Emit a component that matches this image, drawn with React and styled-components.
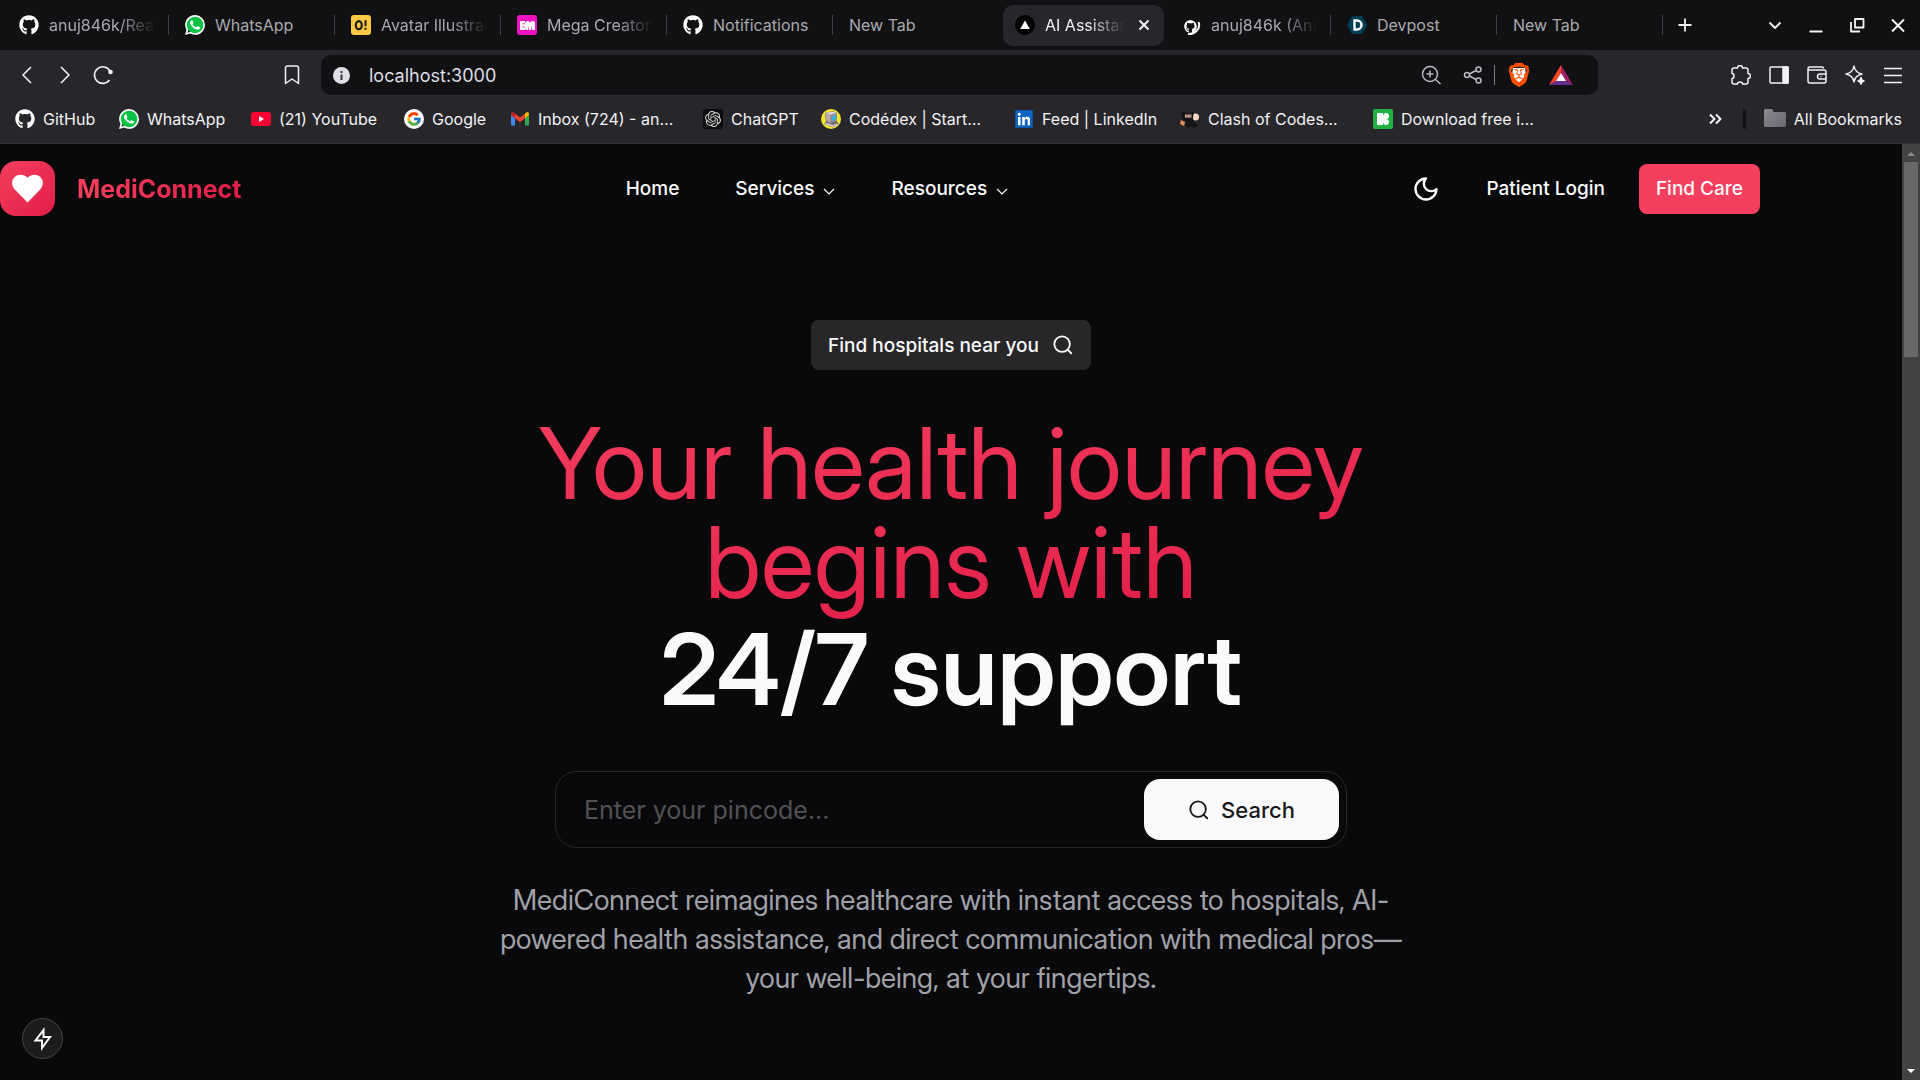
import * as React from "react";
import styled, { createGlobalStyle } from "styled-components";
import { FaGithub, FaLinkedin } from "react-icons/fa6";
import { SiWhatsapp, SiBrave, SiOpenai } from "react-icons/si";
import { FcGoogle } from "react-icons/fc";

const GlobalStyle = createGlobalStyle`
  * {
    box-sizing: border-box;
  }
  body {
    margin: 0;
    background-color: #09090b;
    color: #fafafa;
    font-family: "Inter", "Liberation Sans", sans-serif;
  }
  h1, p, ul {
    margin: 0;
    padding: 0;
  }
  ul {
    list-style: none;
  }
  a {
    color: inherit;
    text-decoration: none;
  }
  button, input {
    font: inherit;
    color: inherit;
    border: 0;
    padding: 0;
    background: none;
  }
  svg {
    display: block;
    flex-shrink: 0;
  }
`;

const TABS = [
  { title: "anuj846k/Readme", icon: <FaGithub size={20} color="#fff" />, line: true, fade: true },
  { title: "WhatsApp", icon: <WhatsAppIcon />, line: true },
  { title: "Avatar Illustrations", icon: <OutlineIcon />, line: true, fade: true },
  { title: "Mega Creator", icon: <MegaIcon />, line: true, fade: true },
  { title: "Notifications", icon: <FaGithub size={20} color="#fff" />, line: true },
  { title: "New Tab" },
  { title: "AI Assistant", icon: <VercelIcon />, active: true, fade: true },
  { title: "anuj846k (Anuj)", icon: <GithubLoadingIcon />, line: true, fade: true },
  { title: "Devpost", icon: <DevpostIcon />, line: true },
  { title: "New Tab", line: true },
];

const BOOKMARKS = [
  { label: "GitHub", width: 104, icon: <FaGithub size={20} color="#fff" /> },
  { label: "WhatsApp", width: 132, icon: <WhatsAppIcon /> },
  { label: "(21) YouTube", width: 153, icon: <YoutubeIcon /> },
  { label: "Google", width: 106, icon: <GoogleIcon /> },
  { label: "Inbox (724) - an…", width: 193, icon: <GmailIcon /> },
  { label: "ChatGPT", width: 118, icon: <ChatIcon /> },
  { label: "Codédex | Start…", width: 193, icon: <CodedexIcon /> },
  { label: "Feed | LinkedIn", width: 166, icon: <LinkedinIcon /> },
  { label: "Clash of Codes…", width: 193, icon: <NinjaIcon /> },
  { label: "Download free i…", width: 193, icon: <FreeIcon /> },
];

export default function App() {
  return (
    <Window>
      <GlobalStyle />
      <TabStrip />
      <Toolbar />
      <Bookmarks />
      <Viewport>
        <Page>
          <SiteHeader />
          <Hero />
          <DevButton type="button" aria-label="Dev tools">
            <BoltIcon />
          </DevButton>
        </Page>
        <Scrollbar aria-hidden="true">
          <ScrollArrow viewBox="0 0 18 18">
            <path d="M5 12l4-4 4 4z" fill="#8b8b8b" />
          </ScrollArrow>
          <ScrollThumb />
          <ScrollSpace />
          <ScrollArrow viewBox="0 0 18 18">
            <path d="M5 7l4 4 4-4z" fill="#fff" />
          </ScrollArrow>
        </Scrollbar>
      </Viewport>
    </Window>
  );
}

function TabStrip() {
  return (
    <Strip>
      <TabList>
        {TABS.map(({ title, icon, active, line, fade }, i) => (
          <TabCell key={i} $line={line}>
            <Tab type="button" $active={active}>
              {icon}
              <TabTitle $fade={fade}>{title}</TabTitle>
              {active && (
                <Stroke size={20} width={2}>
                  <path d="M5.500 5.500l9 9M14.500 5.500l-9 9" />
                </Stroke>
              )}
            </Tab>
          </TabCell>
        ))}
        <IconButton type="button" aria-label="New tab" $w={44}>
          <Stroke size={20} width={1.8}>
            <path d="M10 3.500v13M3.500 10h13" />
          </Stroke>
        </IconButton>
      </TabList>
      <WindowButtons>
        <IconButton type="button" aria-label="Search tabs" $w={41}>
          <Stroke size={20} width={2}>
            <path d="M4.500 7.500l5.500 5.500 5.500-5.500" />
          </Stroke>
        </IconButton>
        <IconButton type="button" aria-label="Minimize" $w={41}>
          <Stroke size={20} width={2}>
            <path d="M3.500 16.500h13" />
          </Stroke>
        </IconButton>
        <IconButton type="button" aria-label="Restore" $w={41}>
          <Stroke size={20} width={1.8}>
            <path d="M8 4h8.500v8.500H8zM4 7v9.500h9" />
          </Stroke>
        </IconButton>
        <IconButton type="button" aria-label="Close" $w={41}>
          <Stroke size={20} width={2}>
            <path d="M4 4.500l12 12M16 4.500l-12 12" />
          </Stroke>
        </IconButton>
      </WindowButtons>
    </Strip>
  );
}

function Toolbar() {
  return (
    <ToolRow>
      <ToolGroup>
        <IconButton type="button" aria-label="Back" $w={38}>
          <Stroke size={20} width={1.6}>
            <path d="M14 2L6 10l8 8" />
          </Stroke>
        </IconButton>
        <IconButton type="button" aria-label="Forward" $w={38}>
          <Stroke size={20} width={1.6}>
            <path d="M6 2l8 8-8 8" />
          </Stroke>
        </IconButton>
        <IconButton type="button" aria-label="Reload" $w={38}>
          <Stroke size={20} width={1.6}>
            <path d="M16.500 15A8.300 8.300 0 1 1 17 6" />
            <circle cx="17.500" cy="7" r="2.300" fill="currentColor" stroke="none" />
          </Stroke>
        </IconButton>
      </ToolGroup>
      <BookmarkThis>
        <IconButton type="button" aria-label="Bookmark this page" $w={38}>
          <Stroke size={20} width={1.5}>
            <path d="M3.500 3a2 2 0 0 1 2-2h9a2 2 0 0 1 2 2v15.500L10 14l-6.500 4.500z" />
          </Stroke>
        </IconButton>
      </BookmarkThis>
      <AddressBar>
        <svg width="17" height="17" viewBox="0 0 17 17">
          <circle cx="8.500" cy="8.500" r="8.500" fill="#dedee6" />
          <rect x="7.500" y="7.500" width="2" height="5.500" fill="#303036" />
          <rect x="7.500" y="4" width="2" height="2" fill="#303036" />
        </svg>
        <AddressInput aria-label="Address" defaultValue="localhost:3000" />
        <IconButton type="button" aria-label="Zoom" $w={42} $dim>
          <Stroke size={20} width={1.5}>
            <circle cx="9" cy="9" r="7.500" />
            <path d="M14.500 14.500l5 4.500M5.500 9h7M9 5.500v7" />
          </Stroke>
        </IconButton>
        <IconButton type="button" aria-label="Share" $w={42} $dim>
          <Stroke size={20} width={1.5}>
            <circle cx="4" cy="10" r="2.500" />
            <circle cx="15.500" cy="4.500" r="2.500" />
            <circle cx="15.500" cy="15.500" r="2.500" />
            <path d="M6.500 9l6.500-3.500M6.500 11l6.500 3.500" />
          </Stroke>
        </IconButton>
        <Divider />
        <IconButton type="button" aria-label="Brave Shields" $w={48}>
          <svg width="24" height="24" viewBox="0 0 24 24">
            <path d="M6 5h12l1 6-3 7-4 3-4-3-3-7z" fill="#fff" />
            <SiBrave size={24} color="#ff5000" />
          </svg>
        </IconButton>
        <IconButton type="button" aria-label="Brave Rewards" $w={36}>
          <svg width="24" height="20" viewBox="0 0 24 20">
            <path d="M12 0L0 20l7-4 5-8z" fill="#ff4724" />
            <path d="M12 0l12 20-7-4-5-8z" fill="#9e1f63" />
            <path d="M0 20h24l-7-4H7z" fill="#662d91" />
            <path d="M12 8l5 8H7z" fill="#fff" />
          </svg>
        </IconButton>
      </AddressBar>
      <ToolGroup>
        <IconButton type="button" aria-label="Extensions" $w={38}>
          <Stroke size={20} width={1.5}>
            <path d="M1 5q0-2 2-2h3.500q0-2.500 2.500-2.500T11.500 3H15q2 0 2 2v3.500q2.500 0 2.500 2.500T17 13.500V17q0 2-2 2h-3.500q0-2-2.500-2t-2.500 2H3q-2 0-2-2v-3.500q2 0 2-2.500T1 8.500z" />
          </Stroke>
        </IconButton>
        <IconButton type="button" aria-label="Side panel" $w={38}>
          <Stroke size={20} width={1.5}>
            <rect x="1" y="2" width="18" height="16" rx="1" />
            <path d="M14 2h5v16h-5z" fill="currentColor" />
          </Stroke>
        </IconButton>
        <IconButton type="button" aria-label="Wallet" $w={38}>
          <Stroke size={20} width={1.5}>
            <path d="M1 4v12q0 2 2 2h14q2 0 2-2V7q0-2-2-2H2.500Q1 5 1 3.500T2.500 2H15q1.500 0 1.500 1.500M19 9h-6q-2.500 0-2.500 2.500T13 14h6M13.500 11.500h1" />
          </Stroke>
        </IconButton>
        <IconButton type="button" aria-label="Leo AI" $w={38}>
          <Stroke size={20} width={1.5}>
            <path d="M9 1q1 6.500 8 8-7 1.500-8 8-1-6.500-8-8 7-1.500 8-8z" />
            <path d="M16 12.500q.5 3 3 3.500-2.500.5-3 3-.5-2.500-3-3 2.500-.5 3-3.500z" fill="currentColor" />
          </Stroke>
        </IconButton>
        <IconButton type="button" aria-label="Menu" $w={38}>
          <Stroke size={20} width={1.5}>
            <path d="M1 3.500h18M1 10.500h18M1 17.500h18" />
          </Stroke>
        </IconButton>
      </ToolGroup>
    </ToolRow>
  );
}

function Bookmarks() {
  return (
    <BookmarkRow>
      <BookmarkList>
        {BOOKMARKS.map(({ label, width, icon }) => (
          <BookmarkItem key={label} $w={width}>
            <BookmarkLink href="#">
              {icon}
              {label}
            </BookmarkLink>
          </BookmarkItem>
        ))}
      </BookmarkList>
      <BookmarkEnd>
        <IconButton type="button" aria-label="More bookmarks" $w={20}>
          <Stroke size={14} width={2}>
            <path d="M2 2.500L6.500 7 2 11.500M8 2.500L12.500 7 8 11.500" />
          </Stroke>
        </IconButton>
        <DarkDivider />
        <BookmarkLink href="#">
          <FolderIcon />
          All Bookmarks
        </BookmarkLink>
      </BookmarkEnd>
    </BookmarkRow>
  );
}

function SiteHeader() {
  return (
    <Header>
      <Brand href="#">
        <Logo>
          <svg width="37" height="37" viewBox="0 0 24 24" fill="#fff">
            <path d="M19 14c1.490-1.460 3-3.210 3-5.500A5.500 5.500 0 0 0 16.500 3c-1.760 0-3 .5-4.500 2-1.500-1.500-2.740-2-4.500-2A5.500 5.500 0 0 0 2 8.500c0 2.300 1.500 4.050 3 5.500l7 7Z" />
          </svg>
        </Logo>
        <BrandName>MediConnect</BrandName>
      </Brand>
      <Nav>
        <a href="#">Home</a>
        <NavMenu type="button">
          Services
          <ChevronDown />
        </NavMenu>
        <NavMenu type="button">
          Resources
          <ChevronDown />
        </NavMenu>
      </Nav>
      <Actions>
        <IconButton type="button" aria-label="Toggle theme" $w={72}>
          <svg width="28" height="28" viewBox="0 0 24 24" fill="none" stroke="#fff" strokeWidth="2" strokeLinejoin="round">
            <path d="M12 3a6 6 0 0 0 9 9 9 9 0 1 1-9-9Z" />
          </svg>
        </IconButton>
        <LoginLink href="#">Patient Login</LoginLink>
        <PrimaryButton type="button">Find Care</PrimaryButton>
      </Actions>
    </Header>
  );
}

function Hero() {
  return (
    <Main>
      <PillButton type="button">
        Find hospitals near you
        <SearchIcon size={22} />
      </PillButton>
      <Title>
        <Gradient>Your health journey begins with</Gradient>
        <Support>24/7 support</Support>
      </Title>
      <SearchForm onSubmit={(e) => e.preventDefault()}>
        <PincodeInput aria-label="Pincode" placeholder="Enter your pincode..." />
        <SearchButton type="submit">
          <SearchIcon size={22} />
          Search
        </SearchButton>
      </SearchForm>
      <Lead>
        MediConnect reimagines healthcare with instant access to hospitals,
        AI-powered health assistance, and direct communication with medical
        pros—your well-being, at your fingertips.
      </Lead>
    </Main>
  );
}

function Stroke({ size, width, children }) {
  return (
    <svg
      width={size}
      height={size}
      viewBox={`0 0 ${size} ${size}`}
      fill="none"
      stroke="currentColor"
      strokeWidth={width}
      strokeLinejoin="round"
    >
      {children}
    </svg>
  );
}

function SearchIcon({ size }) {
  return (
    <svg width={size} height={size} viewBox="0 0 24 24" fill="none" stroke="currentColor" strokeWidth="2" strokeLinecap="round">
      <circle cx="11" cy="11" r="8.500" />
      <path d="M21 21l-4-4" />
    </svg>
  );
}

function ChevronDown() {
  return (
    <Chevron width="12" height="12" viewBox="0 0 12 12" fill="none" stroke="currentColor" strokeWidth="1.2">
      <path d="M1 4l5 5 5-5" />
    </Chevron>
  );
}

function BoltIcon() {
  return (
    <svg width="22" height="24" viewBox="0 0 22 24" fill="none" stroke="#fff" strokeWidth="2">
      <path d="M11.500 3L3.500 13.500h6.500v7.500l8-11h-6.500z" />
    </svg>
  );
}

function WhatsAppIcon() {
  return (
    <svg width="20" height="20" viewBox="0 0 20 20">
      <circle cx="10.200" cy="9.800" r="8.800" fill="#0ac244" />
      <SiWhatsapp size={20} color="#fff" />
    </svg>
  );
}

function OutlineIcon() {
  return (
    <svg width="20" height="20" viewBox="0 0 20 20">
      <rect width="20" height="20" rx="3" fill="#fdc845" />
      <ellipse cx="7.800" cy="10.200" rx="3" ry="4" fill="none" stroke="#1d1b16" strokeWidth="2.200" />
      <path d="M14.500 5.200v6M14.500 12.800v2" stroke="#1d1b16" strokeWidth="2" />
    </svg>
  );
}

function MegaIcon() {
  return (
    <svg width="20" height="20" viewBox="0 0 20 20">
      <rect width="20" height="20" rx="3" fill="#f012be" />
      <path d="M3 6h5v2q1-2 3-2 1.500 0 2 1.500Q14 6 16 6q2 0 2 2v7h-3v-4l-1 4h-2v-4l-1 4H9v-2l-1 2H3z" fill="#fff" />
      <path d="M5.500 8.800h2.500M5.500 12h2" stroke="#f012be" strokeWidth="1" />
    </svg>
  );
}

function VercelIcon() {
  return (
    <svg width="20" height="20" viewBox="0 0 20 20">
      <circle cx="10" cy="10" r="10" fill="#000" />
      <path d="M10 5.500l4.800 8.500H5.200z" fill="#fff" />
    </svg>
  );
}

function GithubLoadingIcon() {
  return (
    <svg width="20" height="22" viewBox="0 0 20 22">
      <svg x="3" y="6" width="13" height="13" viewBox="0 0 13 13">
        <FaGithub size={13} color="#fff" />
      </svg>
      <path d="M17.500 8q2 5-2 9-3.500 3.500-8.500 3" fill="none" stroke="#fff" strokeWidth="2" />
    </svg>
  );
}

function DevpostIcon() {
  return (
    <svg width="20" height="20" viewBox="0 0 20 20">
      <path d="M5 1h10l5 9-5 9H5l-5-9z" fill="#003e54" />
      <path d="M7.500 5.500h2.500a4.500 4.500 0 0 1 0 9H7.500z" fill="none" stroke="#fff" strokeWidth="2.400" />
    </svg>
  );
}

function YoutubeIcon() {
  return (
    <svg width="20" height="20" viewBox="0 0 20 20">
      <rect y="3" width="20" height="14" rx="3" fill="#ff0033" />
      <path d="M8 7l5 3-5 3z" fill="#fff" />
    </svg>
  );
}

function GoogleIcon() {
  return (
    <svg width="20" height="20" viewBox="0 0 20 20">
      <circle cx="10" cy="10" r="10" fill="#fff" />
      <svg x="2" y="2" width="16" height="16" viewBox="0 0 16 16">
        <FcGoogle size={16} />
      </svg>
    </svg>
  );
}

function GmailIcon() {
  return (
    <svg width="20" height="20" viewBox="0 0 20 20">
      <path d="M1 6v9.500q0 1 1 1h3V8.500z" fill="#4285f4" />
      <path d="M19 6v9.500q0 1-1 1h-3V8.500z" fill="#34a853" />
      <path d="M5 4.500l5 4 5-4v4.700l-5 4-5-4z" fill="#ea4335" />
      <path d="M1 6V5q0-2 2-2l2 1.500v4.700L1 6z" fill="#c5221f" />
      <path d="M19 6V5q0-2-2-2l-2 1.500v4.700L19 6z" fill="#fbbc04" />
    </svg>
  );
}

function ChatIcon() {
  return (
    <svg width="20" height="20" viewBox="0 0 20 20">
      <rect width="20" height="20" rx="3" fill="#0d0d0d" />
      <svg x="2" y="2" width="16" height="16" viewBox="0 0 16 16">
        <SiOpenai size={16} color="#d5d5d5" />
      </svg>
    </svg>
  );
}

function CodedexIcon() {
  return (
    <svg width="20" height="20" viewBox="0 0 20 20">
      <circle cx="10" cy="10" r="10" fill="#f3e52b" />
      <path d="M4 4l8-2 4 2v9l2 2-6 3.500L3 15l2-2z" fill="#6f666c" />
      <path d="M4.500 4l5 2v8l-4-2z" fill="#b5abb1" />
      <path d="M4.500 4l7-1.500L16 4 9.500 6z" fill="#ddd5da" />
      <path d="M9.500 6L16 4v8l-6.500 2z" fill="#988f95" />
      <path d="M11 7.500l4-1.500v4.500l-4 1.500z" fill="#2db6d8" />
      <path d="M3 15l3-1 6 2 4-1.500 1 1-5 2.500z" fill="#d8d0d5" />
    </svg>
  );
}

function LinkedinIcon() {
  return (
    <svg width="20" height="20" viewBox="0 0 20 20">
      <rect x="2" y="2" width="14" height="15" fill="#fff" />
      <FaLinkedin size={20} color="#0a66c2" />
    </svg>
  );
}

function NinjaIcon() {
  return (
    <svg width="20" height="20" viewBox="0 0 20 20">
      <circle cx="15.500" cy="8" r="3.500" fill="#f8d9c5" />
      <path d="M1 11l4 2-1 4-4-2z" fill="#e58a5c" />
      <path d="M2 2l4 2h5l3-2-1 7 1 4 4 3-3 3-4-2-3 2-3-3 1-3-4-4z" fill="#151314" />
      <path d="M5 5.500h6.500v3H5z" fill="#e5b79d" />
      <path d="M7 6v1.500M10 6v1.500" stroke="#222" strokeWidth="1" />
    </svg>
  );
}

function FreeIcon() {
  return (
    <svg width="20" height="20" viewBox="0 0 20 20">
      <rect width="20" height="20" rx="2" fill="#1fb141" />
      <path d="M4 4h6v4q0-4 3-4t3 3-3 3q3 0 3 3t-3 3-3-4v4H4z" fill="#fff" />
    </svg>
  );
}

function FolderIcon() {
  return (
    <svg width="22" height="20" viewBox="0 0 22 20">
      <defs>
        <linearGradient id="folder" x1="0" y1="0" x2="1" y2="1">
          <stop offset="0" stopColor="#8c8b94" />
          <stop offset="1" stopColor="#696871" />
        </linearGradient>
      </defs>
      <path d="M0 1.500Q0 0 1.500 0H8l1.500 3H20.500Q22 3 22 4.500v12q0 1.500-1.500 1.500h-19Q0 18 0 16.500z" fill="url(#folder)" />
    </svg>
  );
}

const Window = styled.div`
  display: flex;
  flex-direction: column;
  height: 100vh;
  overflow: hidden;
`;

const Strip = styled.div`
  display: flex;
  justify-content: space-between;
  align-items: center;
  height: 50px;
  padding-left: 3px;
  flex-shrink: 0;
  background-color: #111113;
`;

const TabList = styled.div`
  display: flex;
  align-items: center;
  flex: 1;
  min-width: 0;
`;

const TabCell = styled.div`
  display: flex;
  align-items: center;
  flex: 0 1 166px;
  min-width: 0;
  padding-left: 4px;
  &::after {
    content: "";
    width: 1px;
    height: 20px;
    background-color: ${(p) => (p.$line ? "#414145" : "transparent")};
  }
`;

const Tab = styled.button`
  display: flex;
  align-items: center;
  gap: 10px;
  flex: 1;
  min-width: 0;
  height: 41px;
  padding: 0 ${(p) => (p.$active ? 10 : 13)}px 0 12px;
  border-radius: 10px;
  font-size: 16px;
  text-align: left;
  color: ${(p) => (p.$active ? "#f2f2f5" : "#a9a9ae")};
  background-color: ${(p) => (p.$active ? "#27262b" : "transparent")};
`;

const TabTitle = styled.span`
  flex: 1;
  min-width: 0;
  overflow: hidden;
  white-space: nowrap;
  mask-image: ${(p) => (p.$fade ? "linear-gradient(to left, transparent, #000 36px)" : "none")};
`;

const WindowButtons = styled.div`
  display: flex;
  padding-right: 2px;
`;

const IconButton = styled.button`
  display: flex;
  justify-content: center;
  align-items: center;
  flex-shrink: 0;
  width: ${(p) => p.$w}px;
  height: 32px;
  color: ${(p) => (p.$dim ? "#b9b9be" : "#f2f2f5")};
`;

const ToolRow = styled.div`
  display: flex;
  align-items: center;
  height: 50px;
  flex-shrink: 0;
  padding: 0 8px;
  background-color: #27262b;
`;

const ToolGroup = styled.div`
  display: flex;
`;

const BookmarkThis = styled.div`
  display: flex;
  justify-content: flex-end;
  width: 199px;
  padding-right: 10px;
`;

const AddressBar = styled.div`
  display: flex;
  align-items: center;
  flex: 1;
  height: 40px;
  margin-right: 124px;
  padding: 0 19px 0 12px;
  border-radius: 10px;
  background-color: #111113;
`;

const AddressInput = styled.input`
  flex: 1;
  min-width: 0;
  margin-left: 19px;
  font-size: 18px;
  color: #dedee6;
  outline: none;
`;

const Divider = styled.span`
  width: 1px;
  height: 20px;
  background-color: #77777c;
`;

const BookmarkRow = styled.div`
  display: flex;
  justify-content: space-between;
  align-items: center;
  height: 44px;
  flex-shrink: 0;
  padding: 0 18px 6px 15px;
  background-color: #27262b;
  border-bottom: 1px solid #36353a;
`;

const BookmarkList = styled.ul`
  display: flex;
  min-width: 0;
  overflow: hidden;
`;

const BookmarkItem = styled.li`
  flex: 0 0 ${(p) => p.$w}px;
`;

const BookmarkLink = styled.a`
  display: flex;
  align-items: center;
  gap: 8px;
  height: 24px;
  font-size: 16px;
  white-space: nowrap;
  color: #f2f2f5;
`;

const BookmarkEnd = styled.div`
  display: flex;
  align-items: center;
  gap: 18px;
`;

const DarkDivider = styled(Divider)`
  width: 3px;
  border-radius: 2px;
  background-color: #111113;
`;

const Viewport = styled.div`
  display: flex;
  flex: 1;
  min-height: 0;
`;

const Page = styled.div`
  position: relative;
  flex: 1;
  min-width: 0;
  overflow: hidden;
`;

const Scrollbar = styled.div`
  display: flex;
  flex-direction: column;
  align-items: center;
  width: 18px;
  background-color: #424242;
`;

const ScrollArrow = styled.svg`
  width: 18px;
  height: 18px;
`;

const ScrollThumb = styled.div`
  flex: 195;
  width: 14px;
  background-color: #686868;
`;

const ScrollSpace = styled.div`
  flex: 705;
`;

const Header = styled.header`
  display: flex;
  justify-content: space-between;
  align-items: center;
  max-width: 1760px;
  padding: 17px 0;
  font-size: 19px;
  font-weight: 500;
`;

const Brand = styled.a`
  display: flex;
  align-items: center;
  gap: 22px;
`;

const Logo = styled.span`
  display: grid;
  place-items: center;
  width: 55px;
  height: 55px;
  border-radius: 16px;
  background-image: linear-gradient(to bottom right, #f43f5e, #e11d48);
`;

const BrandName = styled.span`
  font-size: 25px;
  font-weight: 700;
  color: transparent;
  background-image: linear-gradient(to right, #f43f5e, #e11d48);
  background-clip: text;
`;

const Nav = styled.nav`
  display: flex;
  align-items: center;
  gap: 56px;
  padding-left: 2px;
`;

const NavMenu = styled.button`
  display: flex;
  align-items: center;
  gap: 9px;
`;

const Chevron = styled.svg`
  margin-top: 4px;
`;

const Actions = styled.div`
  display: flex;
  align-items: center;
`;

const LoginLink = styled.a`
  padding: 0 34px 0 24px;
`;

const PrimaryButton = styled.button`
  height: 50px;
  padding: 0 17px;
  border-radius: 8px;
  background-color: #f43f5e;
`;

const Main = styled.main`
  display: flex;
  flex-direction: column;
  align-items: center;
  padding: 87px 24px 0;
`;

const PillButton = styled.button`
  display: flex;
  align-items: center;
  gap: 13px;
  height: 50px;
  padding: 0 17px;
  border-radius: 8px;
  font-size: 19px;
  font-weight: 500;
  background-color: #27272a;
`;

const Title = styled.h1`
  max-width: 924px;
  margin-top: 44px;
  font-family: "Inter Display", "Inter", "Liberation Sans", sans-serif;
  font-size: 99px;
  line-height: 99px;
  font-weight: 400;
  text-align: center;
`;

const Gradient = styled.span`
  color: transparent;
  background-image: linear-gradient(to bottom right, #f43f5e, #e11d48);
  background-clip: text;
`;

const Support = styled.span`
  display: block;
  margin-top: 8px;
  font-weight: 600;
`;

const SearchForm = styled.form`
  display: flex;
  width: 100%;
  max-width: 792px;
  height: 77px;
  margin-top: 52px;
  padding: 7px;
  border: 1px solid #27272a;
  border-radius: 22px;
`;

const PincodeInput = styled.input`
  flex: 1;
  min-width: 0;
  padding: 0 21px;
  font-size: 25px;
  outline: none;
  &::placeholder {
    color: #515155;
    opacity: 1;
  }
`;

const SearchButton = styled.button`
  display: flex;
  justify-content: center;
  align-items: center;
  gap: 11px;
  width: 195px;
  border-radius: 16px;
  font-size: 22px;
  font-weight: 500;
  color: #18181b;
  background-color: #fafafa;
`;

const Lead = styled.p`
  max-width: 924px;
  margin-top: 33px;
  font-family: "Inter Display", "Inter", "Liberation Sans", sans-serif;
  font-size: 28px;
  line-height: 39px;
  text-align: center;
  color: #a1a1aa;
`;

const DevButton = styled.button`
  position: absolute;
  left: 22px;
  bottom: 21px;
  display: grid;
  place-items: center;
  width: 41px;
  height: 41px;
  border: 1px solid #444447;
  border-radius: 50%;
  background-color: #1c1c1e;
`;
